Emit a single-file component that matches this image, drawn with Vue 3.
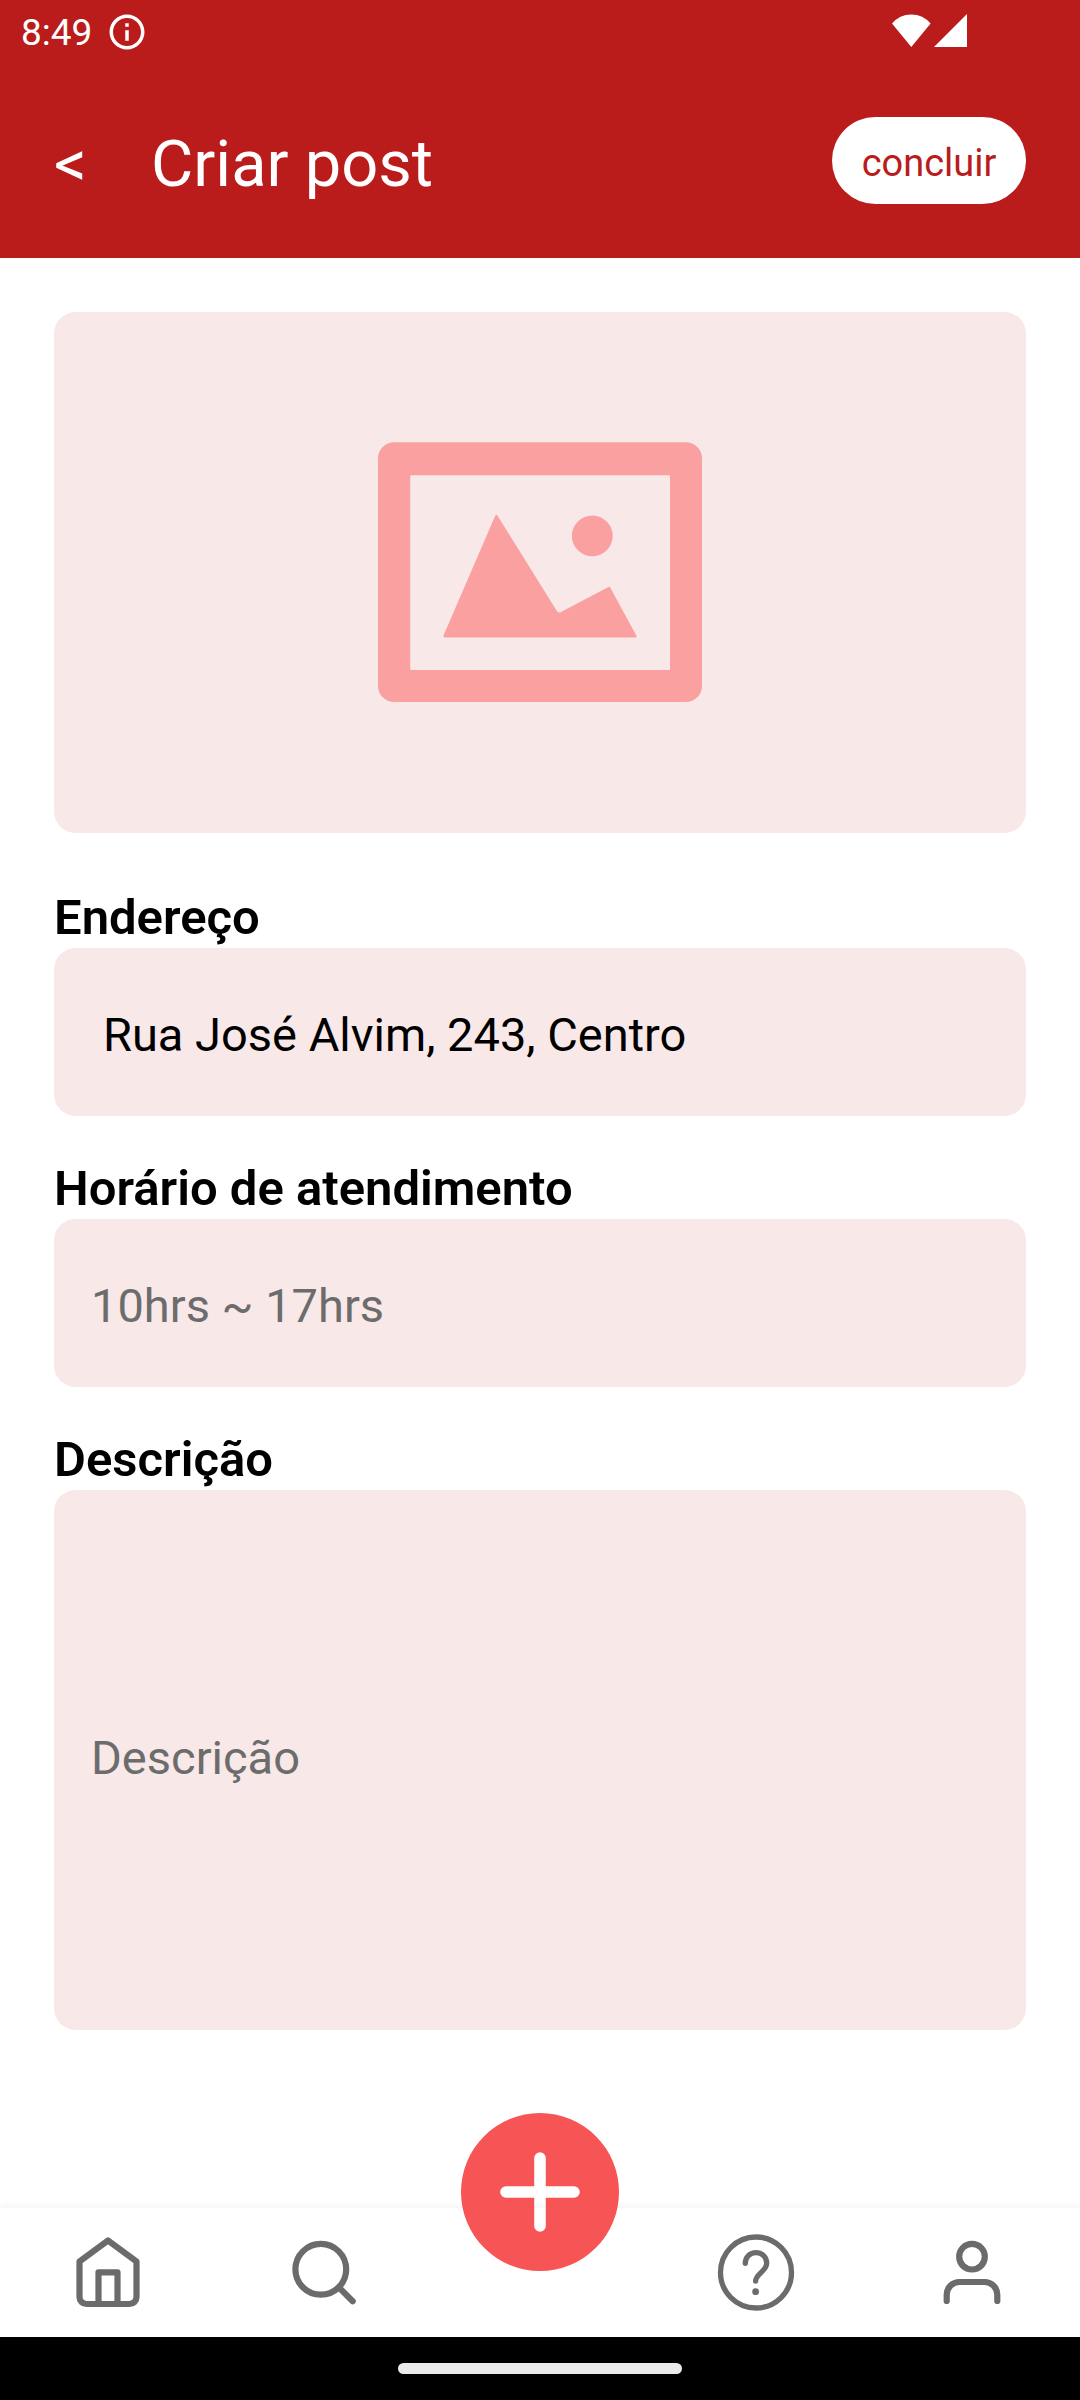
<script setup>
import { ref } from 'vue'

const address = ref('Rua José Alvim, 243, Centro')
</script>

<template>
  <div class="screen">
    <header class="header">
      <div class="status">
        <span class="clock">8:49</span>
        <svg class="info" viewBox="0 0 24 24" fill="#fff">
          <path d="M11 7h2v2h-2zm0 4h2v6h-2zm1-9C6.48 2 2 6.48 2 12s4.480 10 10 10 10-4.480 10-10S17.520 2 12 2zm0 18c-4.410 0-8-3.590-8-8s3.590-8 8-8 8 3.590 8 8-3.590 8-8 8z" />
        </svg>
        <svg class="signal" viewBox="0 0 76 34" fill="#fff">
          <path d="M0 9.500Q7.500 0.400 19.300 0.400T38.600 9.500L19.300 33Z" />
          <path d="M42 33L75 0V33Z" />
        </svg>
      </div>
      <div class="bar">
        <button class="back">&lt;</button>
        <h1 class="title">Criar post</h1>
        <button class="done">concluir</button>
      </div>
    </header>

    <main class="form">
      <div class="picker">
        <svg width="324" height="260" viewBox="0 0 324 260" fill="#faa0a0">
          <path fill-rule="evenodd" d="M16 0.300H308A16 16 0 0 1 324 16.300V244A16 16 0 0 1 308 260H16A16 16 0 0 1 0 244V16.300A16 16 0 0 1 16 0.300ZM33.200 33.200Q32.200 33.200 32.200 34.200V227Q32.200 228 33.200 228H291Q292 228 292 227V34.200Q292 33.200 291 33.200Z" />
          <path d="M117.200 73.700Q118.300 71.700 119.500 73.700L179 169.200Q180.500 171.200 182.500 170.200L230.500 144.900Q231.500 144.400 232.200 145.500L258.300 193.500Q259.300 195.500 257.300 195.500H67Q64.800 195.500 65.500 193.500Z" />
          <circle cx="214.300" cy="93.900" r="20.400" />
        </svg>
      </div>

      <label class="label">Endereço</label>
      <div class="field filled">{{ address }}</div>

      <label class="label">Horário de atendimento</label>
      <div class="field">10hrs ~ 17hrs</div>

      <label class="label">Descrição</label>
      <div class="field tall">Descrição</div>
    </main>

    <nav class="tabs">
      <div class="tab">
        <svg class="icon" viewBox="-42 -42.5 84 85">
          <path d="M0-32L28.500-11V24.500A7 7 0 0 1 21.500 31.500H-21.500A7 7 0 0 1-28.500 24.500V-11ZM-9.500 31.500V-0.200H9.500V31.500" />
        </svg>
      </div>
      <div class="tab">
        <svg class="icon" viewBox="-42 -42.5 84 85">
          <circle cx="-3.200" cy="-3.200" r="25.400" />
          <path d="M15 15L28.700 28.700" />
        </svg>
      </div>
      <div class="tab">
        <svg class="add" width="158" height="158" viewBox="-79 -79 158 158" fill="#f75555">
          <path fill-rule="evenodd" d="M0-79A79 79 0 0 1 0 79A79 79 0 0 1 0-79ZM-5.800-5.800H-34A5.800 5.800 0 0 0-34 5.800H-5.800V34A5.800 5.800 0 0 0 5.800 34V5.800H34A5.800 5.800 0 0 0 34-5.800H5.800V-34A5.800 5.800 0 0 0-5.800-34Z" />
        </svg>
      </div>
      <div class="tab">
        <svg class="icon thin" viewBox="-42 -42.5 84 85">
          <circle r="35.500" />
          <path d="M-10.700-9.200C-10.700-15.500-6-19.800 0-19.800S10.700-15.500 10.700-9.200C10.700-1.500-0.400 1.500-0.400 8.600" />
          <circle class="dot" cx="-0.400" cy="19.200" r="3.400" />
        </svg>
      </div>
      <div class="tab">
        <svg class="icon" viewBox="-42 -42.5 84 85">
          <circle cy="-15.800" r="12.800" />
          <path d="M-25.300 28.500V22.200A12.700 12.700 0 0 1-12.600 9.500H12.600A12.700 12.700 0 0 1 25.300 22.200V28.500" />
        </svg>
      </div>
    </nav>

    <div class="gesture"><span class="pill"></span></div>
  </div>
</template>

<style>
body {
  margin: 0;
  background: #fff;
}
</style>

<style scoped>
.screen {
  display: flex;
  flex-direction: column;
  width: 1080px;
  height: 2400px;
  overflow: hidden;
  background: #fff;
  font-family: Roboto, "Liberation Sans", sans-serif;
}

.header {
  height: 258px;
  background: #ba1b1b;
  color: #fff;
}

.status {
  display: flex;
  align-items: center;
  height: 63px;
  padding: 0 113px 0 21px;
}

.clock {
  width: 85px;
  padding-top: 2px;
  font-size: 37px;
  line-height: 44px;
}

.info {
  width: 42px;
  height: 42px;
}

.signal {
  width: 76px;
  height: 34px;
  margin: 0 -1px 2px auto;
}

.bar {
  display: flex;
  align-items: center;
  height: 195px;
  box-sizing: border-box;
  padding: 0 54px;
}

button {
  border: 0;
  padding: 0;
  background: none;
  color: inherit;
  font-family: inherit;
}

.back {
  width: 97px;
  padding-top: 6px;
  text-align: left;
  font-size: 64.800px;
  font-weight: 400;
}

.title {
  margin: 0;
  padding-top: 6px;
  font-size: 65px;
  font-weight: 400;
  line-height: 76px;
}

.done {
  width: 194px;
  height: 87px;
  margin-left: auto;
  padding-top: 4px;
  border-radius: 43.500px;
  background: #fff;
  color: #ba1b1b;
  font-size: 38px;
}

.form {
  display: flex;
  flex: 1;
  flex-direction: column;
  padding: 54px 54px 0;
}

.picker {
  display: flex;
  align-items: center;
  justify-content: center;
  height: 521px;
  box-sizing: border-box;
  padding-bottom: 1px;
  margin-bottom: 12px;
  border-radius: 21.600px;
  background: #f8e8e8;
}

.label {
  height: 57px;
  margin-top: 46px;
  color: #000;
  font-size: 49px;
  font-weight: 600;
  line-height: 53px;
}

.field {
  display: flex;
  align-items: center;
  height: 168px;
  box-sizing: border-box;
  padding: 4px 37px 0;
  border-radius: 21.600px;
  background: #f8e8e8;
  color: #6c6c6c;
  font-size: 47px;
}

.filled {
  padding-left: 49px;
  color: #000;
}

.tall {
  height: 540px;
  padding: 0 37px 6px;
}

.tabs {
  display: grid;
  grid-template-columns: repeat(5, 1fr);
  height: 129px;
  background: #fff;
  box-shadow: 0 -1px 8px rgba(0, 0, 0, 0.060);
}

.tab {
  display: flex;
  align-items: center;
  justify-content: center;
}

.icon {
  width: 84px;
  height: 85px;
  fill: none;
  stroke: #6b6b6b;
  stroke-width: 6.200;
  stroke-linecap: round;
  stroke-linejoin: round;
}

.thin {
  stroke-width: 5.300;
}

.dot {
  fill: #6b6b6b;
  stroke: none;
}

.add {
  margin-top: -161px;
}

.gesture {
  display: flex;
  align-items: center;
  justify-content: center;
  height: 63px;
  background: #000;
}

.pill {
  width: 284px;
  height: 11px;
  border-radius: 5.500px;
  background: #ebebeb;
}
</style>
